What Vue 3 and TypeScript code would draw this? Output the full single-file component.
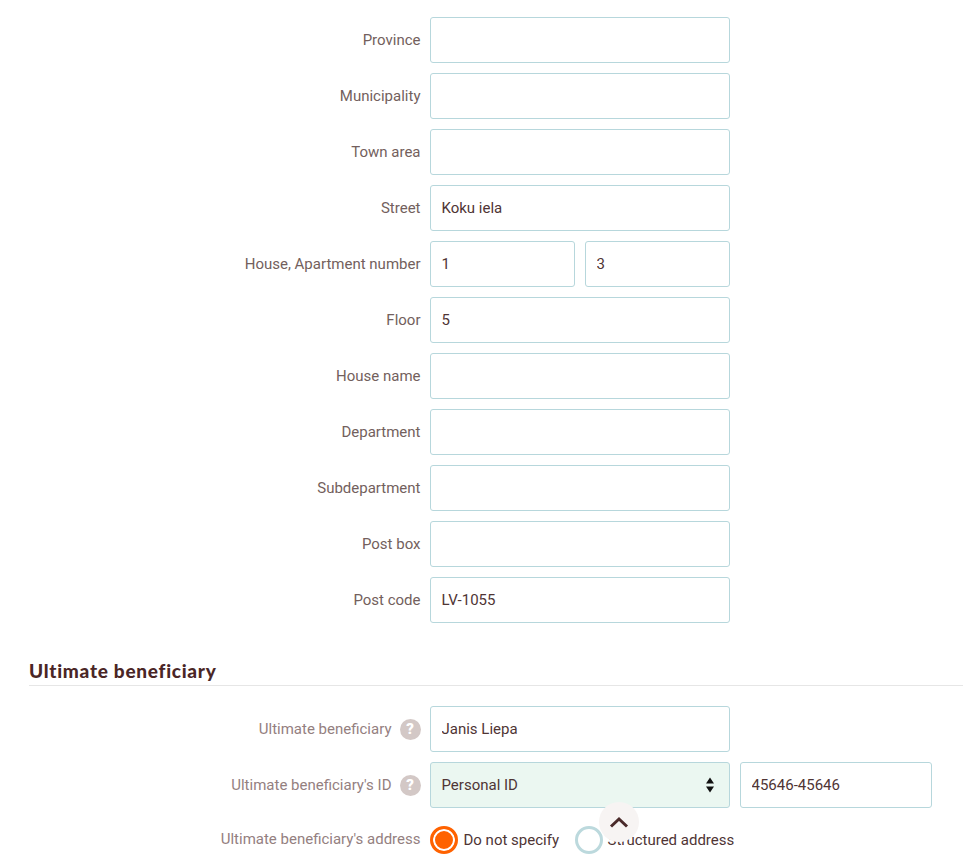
<script setup lang="ts">
interface Row { label: string; values: string[] }
const rows: Row[] = [
  { label: 'Province', values: [''] },
  { label: 'Municipality', values: [''] },
  { label: 'Town area', values: [''] },
  { label: 'Street', values: ['Koku iela'] },
  { label: 'House, Apartment number', values: ['1', '3'] },
  { label: 'Floor', values: ['5'] },
  { label: 'House name', values: [''] },
  { label: 'Department', values: [''] },
  { label: 'Subdepartment', values: [''] },
  { label: 'Post box', values: [''] },
  { label: 'Post code', values: ['LV-1055'] },
]
</script>

<template>
  <div class="page">
    <form class="rows" @submit.prevent>
      <div v-for="row in rows" :key="row.label" class="row">
        <label class="label">{{ row.label }}</label>
        <div class="pair">
          <input v-for="(v, i) in row.values" :key="i" class="field" :value="v" />
        </div>
      </div>
    </form>

    <h2 class="heading">Ultimate beneficiary</h2>

    <div class="rows beneficiary">
      <div class="row">
        <label class="label muted">Ultimate beneficiary <span class="help">?</span></label>
        <div class="pair"><input class="field" value="Janis Liepa" /></div>
      </div>
      <div class="row">
        <label class="label muted">Ultimate beneficiary's ID <span class="help">?</span></label>
        <div class="pair wide">
          <div class="select">
            <span>Personal ID</span>
            <svg width="10" height="16" viewBox="0 0 10 16"><path d="M5 .5 9 6.500H1zM5 15.500 1 9.500h8z" fill="#111" /></svg>
          </div>
          <input class="field second" value="45646-45646" />
        </div>
      </div>
      <div class="row radio-row">
        <label class="label muted address">Ultimate beneficiary's address</label>
        <div class="radios">
          <span class="radio-item"><span class="radio on"></span>Do not specify</span>
          <span class="radio-item"><span class="radio"></span>Structured address</span>
        </div>
      </div>
    </div>

    <button class="top" type="button" aria-label="Back to top">
      <svg width="20" height="12" viewBox="0 0 20 12"><path d="M2 10.500 10 3l8 7.500" fill="none" stroke="#4a2a2a" stroke-width="3" /></svg>
    </button>
  </div>
</template>

<style scoped>
.page {
  position: relative;
  height: 868px;
  overflow: hidden;
  padding-top: 17px;
  box-sizing: border-box;
  font-family: Roboto, "Liberation Sans", sans-serif;
  font-size: 15px;
  color: #4f3535;
}
.rows {
  display: flex;
  flex-direction: column;
  gap: 10px;
}
.row {
  display: flex;
  align-items: center;
  height: 46px;
}
.label {
  width: 420.5px;
  flex: none;
  text-align: right;
  color: #735f5d;
  display: flex;
  justify-content: flex-end;
  align-items: center;
  gap: 8px;
  white-space: nowrap;
}
.muted {
  color: #94807f;
}
.address {
  padding-bottom: 2px;
}
.help {
  width: 21px;
  height: 21px;
  border-radius: 50%;
  background: #d3c8c6;
  color: #fff;
  font-weight: 900;
  font-size: 15px;
  line-height: 21px;
  text-align: center;
}
.pair {
  margin-left: 9.500px;
  width: 300px;
  display: flex;
  gap: 10px;
}
.pair.wide {
  width: 502px;
}
.field,
.select {
  flex: 1 1 0;
  min-width: 0;
  height: 46px;
  box-sizing: border-box;
  border: 1px solid #b7d7dc;
  border-radius: 3px;
  padding: 0 10px 0 10.500px;
  background: #fff;
  color: #4f3535;
  font: inherit;
  outline: none;
}
.select {
  flex: none;
  width: 300px;
  background: #ebf7f1;
  display: flex;
  align-items: center;
  justify-content: space-between;
  padding-right: 14px;
}
.second {
  flex: none;
  width: 192px;
}
.heading {
  margin: 36px 0 20px 29px;
  padding-bottom: 2px;
  border-bottom: 1px solid #e6e6e6;
  height: 24px;
  font-family: Lato, sans-serif;
  font-weight: 900;
  font-size: 19px;
  line-height: 24px;
  color: #4a2626;
  letter-spacing: 0.72px;
}
.radio-row {
  height: 44px;
}
.radios {
  margin-left: 9.500px;
  display: flex;
  gap: 15.500px;
  white-space: nowrap;
}
.radio-item {
  display: flex;
  align-items: center;
  gap: 5.500px;
}
.radio-item + .radio-item {
  gap: 5px;
}
.radio {
  width: 28px;
  height: 28px;
  box-sizing: border-box;
  border-radius: 50%;
  border: 3px solid #bcd9dd;
  background: #fff;
}
.radio.on {
  border-color: #ff6200;
  background: #ff6200;
  box-shadow: inset 0 0 0 2px #fff;
}
.top {
  position: absolute;
  left: 599px;
  top: 802px;
  width: 40px;
  height: 40px;
  border: 0;
  padding: 0;
  border-radius: 50%;
  background: #f7f4f3;
  display: flex;
  align-items: center;
  justify-content: center;
}
</style>
